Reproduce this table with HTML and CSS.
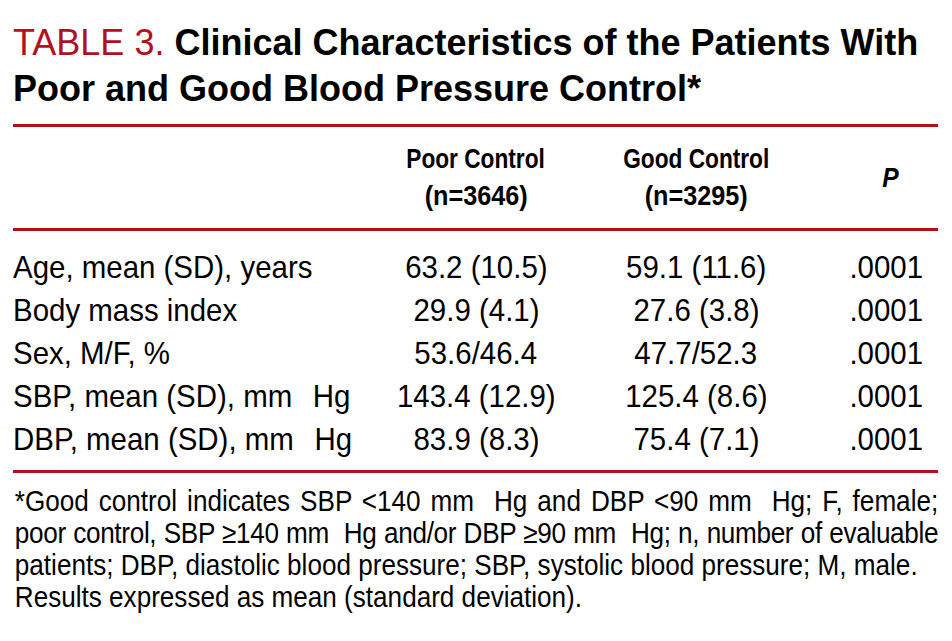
FILE: index.html
```html
<!DOCTYPE html>
<html lang="en">
<head>
<meta charset="utf-8">
<title>Table 3</title>
<link rel="stylesheet" href="styles.css">
</head>
<body>
<div class="page">
  <h1 class="title"><span class="label">TABLE 3.</span> Clinical Characteristics of the Patients With<br>Poor and Good Blood Pressure Control*</h1>
  <div class="head">
    <div></div>
    <div class="center"><span class="c name">Poor Control</span><br><span class="c num">(n=3646)</span></div>
    <div class="center"><span class="c name">Good Control</span><br><span class="c num">(n=3295)</span></div>
    <div class="pval"><span class="c p"><i>P</i></span></div>
  </div>
  <div class="body">
    <div class="row"><div><span class="c l">Age, mean (SD), years</span></div><div class="center"><span class="c">63.2 (10.5)</span></div><div class="center"><span class="c">59.1 (11.6)</span></div><div class="right"><span class="c r">.0001</span></div></div>
    <div class="row"><div><span class="c l">Body mass index</span></div><div class="center"><span class="c">29.9 (4.1)</span></div><div class="center"><span class="c">27.6 (3.8)</span></div><div class="right"><span class="c r">.0001</span></div></div>
    <div class="row"><div><span class="c l">Sex, M/F, %</span></div><div class="center"><span class="c">53.6/46.4</span></div><div class="center"><span class="c">47.7/52.3</span></div><div class="right"><span class="c r">.0001</span></div></div>
    <div class="row"><div><span class="c l">SBP, mean (SD), mm&ensp;&thinsp;Hg</span></div><div class="center"><span class="c">143.4 (12.9)</span></div><div class="center"><span class="c">125.4 (8.6)</span></div><div class="right"><span class="c r">.0001</span></div></div>
    <div class="row"><div><span class="c l">DBP, mean (SD), mm&ensp;&thinsp;Hg</span></div><div class="center"><span class="c">83.9 (8.3)</span></div><div class="center"><span class="c">75.4 (7.1)</span></div><div class="right"><span class="c r">.0001</span></div></div>
  </div>
  <div class="note">
    <span class="line">*Good control indicates SBP &lt;140 mm&nbsp; Hg and DBP &lt;90 mm&nbsp; Hg; F, female;</span>
    <span class="line tight">poor control, SBP &ge;140 mm&nbsp; Hg and/or DBP &ge;90 mm&nbsp; Hg; n, number of evaluable</span>
    <span class="line last">patients; DBP, diastolic blood pressure; SBP, systolic blood pressure; M, male.</span>
    <span class="line last">Results expressed as mean (standard deviation).</span>
  </div>
</div>
</body>
</html>
```
FILE: styles.css
```css
html, body {
  margin: 0;
  padding: 0;
  background: #fff;
  color: #000;
}

.page {
  width: 925px;
  padding: 20px 14px 0 13px;
  font-family: "Liberation Sans", Arial, sans-serif;
}

.title {
  margin: 0 0 12px;
  font-size: 36px;
  line-height: 46px;
  font-weight: 700;
  white-space: nowrap;
}

.label {
  color: #b30f1c;
  font-weight: 400;
}

.head,
.row {
  display: grid;
  grid-template-columns: 353px 220px 220px 1fr;
  padding-right: 15px;
  white-space: nowrap;
}

.head {
  border-top: 3px solid #b30f1c;
  border-bottom: 3px solid #b30f1c;
  padding-top: 13px;
  padding-bottom: 14px;
  font-size: 28px;
  line-height: 37px;
  font-weight: 700;
  align-items: center;
}

.pval {
  text-align: right;
  padding-right: 24px;
}

.body {
  padding: 15px 0 9px;
  border-bottom: 3px solid #b30f1c;
  font-size: 32px;
  line-height: 43px;
}

.center {
  text-align: center;
}

.right {
  text-align: right;
}

/* condensed type: horizontal compression of the sans face */
.c {
  display: inline-block;
  transform: scaleX(0.92);
  transform-origin: center;
}

.c.l {
  transform-origin: left center;
}

.c.r {
  transform-origin: right center;
}

.c.name {
  transform: scaleX(0.81);
}

.c.num {
  transform: scaleX(0.9);
}

.c.p {
  transform: scaleX(0.88);
  transform-origin: right center;
}

.note {
  width: 1026px;
  padding: 12px 0 0 2px;
  font-size: 29px;
  line-height: 32px;
  transform: scaleX(0.9);
  transform-origin: left top;
  white-space: nowrap;
}

.line {
  display: block;
  text-align: justify;
  text-align-last: justify;
}

.line.tight {
  letter-spacing: -0.35px;
}

.line.last {
  text-align-last: left;
}
```
